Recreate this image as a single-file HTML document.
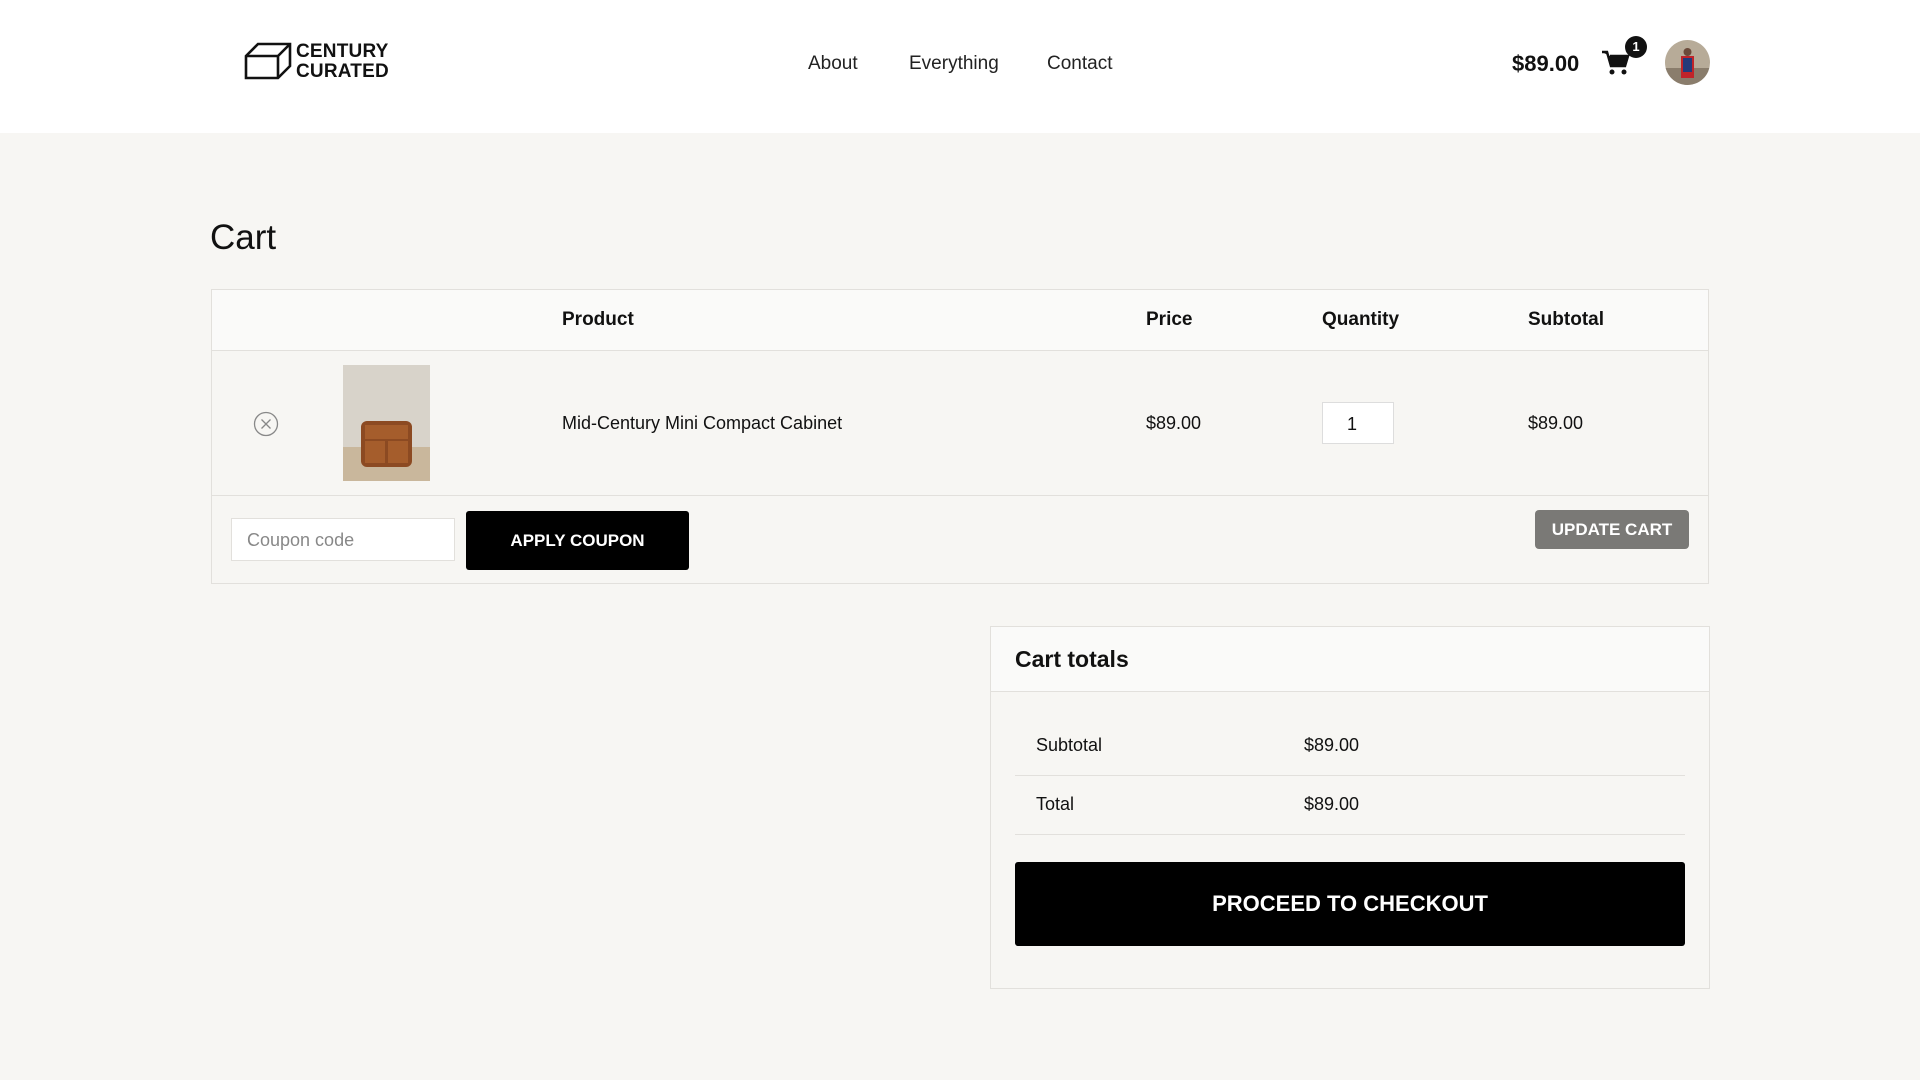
<!DOCTYPE html>
<html><head><meta charset="utf-8"><style>
*{box-sizing:border-box;margin:0;padding:0}
body{width:1920px;height:1080px;background:#f7f6f3;font-family:"Liberation Sans",sans-serif;color:#111;position:relative;overflow:hidden}
.abs{position:absolute}
header{position:absolute;left:0;top:0;width:1920px;height:133px;background:#fff}
.nav{font-size:19px;color:#222;top:53px}
.th{font-size:19px;font-weight:bold;top:309px}
.td{font-size:18px;top:413px}
</style></head><body>
<header>
<svg class="abs" style="left:244px;top:42px" width="48" height="38" viewBox="0 0 48 38"><g fill="none" stroke="#111" stroke-width="2.6"><path d="M2 36V14L14 2H46V24L34 36Z"/><path d="M2 14H34V36M34 14L46 2"/></g></svg>
<div class="abs" style="left:296px;top:42px;font-size:19px;font-weight:bold;line-height:20px;letter-spacing:0.2px">CENTURY<br>CURATED</div>
<div class="abs nav" style="left:808px">About</div>
<div class="abs nav" style="left:909px">Everything</div>
<div class="abs nav" style="left:1047px">Contact</div>
<div class="abs" style="left:1512px;top:51px;font-size:22px;font-weight:bold">$89.00</div>
<svg class="abs" style="left:1602px;top:50px" width="28" height="26" viewBox="0 0 28 26"><path d="M0 2h5l4 14h14l3-10H8" fill="#111" stroke="#111" stroke-width="2.5"/><circle cx="10" cy="22" r="2.5" fill="#111"/><circle cx="22" cy="22" r="2.5" fill="#111"/></svg>
<div class="abs" style="left:1625px;top:36px;width:22px;height:22px;border-radius:50%;background:#111;color:#fff;font-size:13px;font-weight:bold;text-align:center;line-height:22px">1</div>
<svg class="abs" style="left:1665px;top:40px" width="45" height="45" viewBox="0 0 45 45"><defs><clipPath id="c"><circle cx="22.5" cy="22.5" r="22.5"/></clipPath></defs><g clip-path="url(#c)"><rect width="45" height="45" fill="#b7ab98"/><rect y="28" width="45" height="17" fill="#8a7d6c"/><rect x="16" y="16" width="13" height="22" fill="#c0242a"/><rect x="18" y="18" width="9" height="14" fill="#233a7a"/><circle cx="22.5" cy="12" r="4" fill="#6b4a3a"/></g></svg>
</header>
<div class="abs" style="left:210px;top:218px;font-size:35px">Cart</div>
<div class="abs" style="left:211px;top:289px;width:1498px;height:295px;border:1px solid #e2e0dc">
 <div class="abs" style="left:0;top:0;width:1496px;height:61px;background:#fafaf9;border-bottom:1px solid #e2e0dc"></div>
 <div class="abs" style="left:0;top:205px;width:1496px;height:1px;background:#e2e0dc"></div>
</div>
<div class="abs th" style="left:562px">Product</div>
<div class="abs th" style="left:1146px">Price</div>
<div class="abs th" style="left:1322px">Quantity</div>
<div class="abs th" style="left:1528px">Subtotal</div>
<svg class="abs" style="left:253px;top:411px" width="26" height="26" viewBox="0 0 26 26"><circle cx="13" cy="13" r="11.5" fill="none" stroke="#888" stroke-width="1.3"/><path d="M8.5 8.5l9 9M17.5 8.5l-9 9" stroke="#888" stroke-width="1.3"/></svg>
<svg class="abs" style="left:343px;top:365px" width="87" height="116" viewBox="0 0 87 116"><rect width="87" height="116" fill="#d8d3ca"/><rect y="82" width="87" height="34" fill="#c9b79c"/><rect x="18" y="56" width="51" height="46" rx="6" fill="#8c4a22"/><rect x="22" y="60" width="43" height="14" fill="#a55d2c"/><rect x="22" y="76" width="20" height="22" fill="#a55d2c"/><rect x="45" y="76" width="20" height="22" fill="#a55d2c"/></svg>
<div class="abs td" style="left:562px">Mid-Century Mini Compact Cabinet</div>
<div class="abs td" style="left:1146px">$89.00</div>
<div class="abs" style="left:1322px;top:402px;width:72px;height:42px;background:#fff;border:1px solid #ddd;font-size:18px;padding:11px 0 0 24px">1</div>
<div class="abs td" style="left:1528px">$89.00</div>
<div class="abs" style="left:231px;top:518px;width:224px;height:43px;background:#fff;border:1px solid #e2e0dc;font-size:18px;color:#888;padding:11px 15px">Coupon code</div>
<div class="abs" style="left:466px;top:511px;width:223px;height:59px;background:#000;color:#fff;border-radius:3px;font-size:17px;font-weight:bold;text-align:center;line-height:59px">APPLY COUPON</div>
<div class="abs" style="left:1535px;top:510px;width:154px;height:39px;background:#7a7976;color:#fff;border-radius:4px;font-size:17px;font-weight:bold;text-align:center;line-height:39px">UPDATE CART</div>
<div class="abs" style="left:990px;top:626px;width:720px;height:363px;border:1px solid #e2e0dc">
 <div class="abs" style="left:0;top:0;width:718px;height:65px;background:#fafaf9;border-bottom:1px solid #e2e0dc"></div>
</div>
<div class="abs" style="left:1015px;top:646px;font-size:23px;font-weight:bold">Cart totals</div>
<div class="abs td" style="left:1036px;top:735px">Subtotal</div>
<div class="abs td" style="left:1304px;top:735px">$89.00</div>
<div class="abs" style="left:1015px;top:775px;width:670px;height:1px;background:#e2e0dc"></div>
<div class="abs td" style="left:1036px;top:794px">Total</div>
<div class="abs td" style="left:1304px;top:794px">$89.00</div>
<div class="abs" style="left:1015px;top:834px;width:670px;height:1px;background:#e2e0dc"></div>
<div class="abs" style="left:1015px;top:862px;width:670px;height:84px;background:#000;color:#fff;border-radius:3px;font-size:22px;font-weight:bold;text-align:center;line-height:84px">PROCEED TO CHECKOUT</div>
</body></html>
